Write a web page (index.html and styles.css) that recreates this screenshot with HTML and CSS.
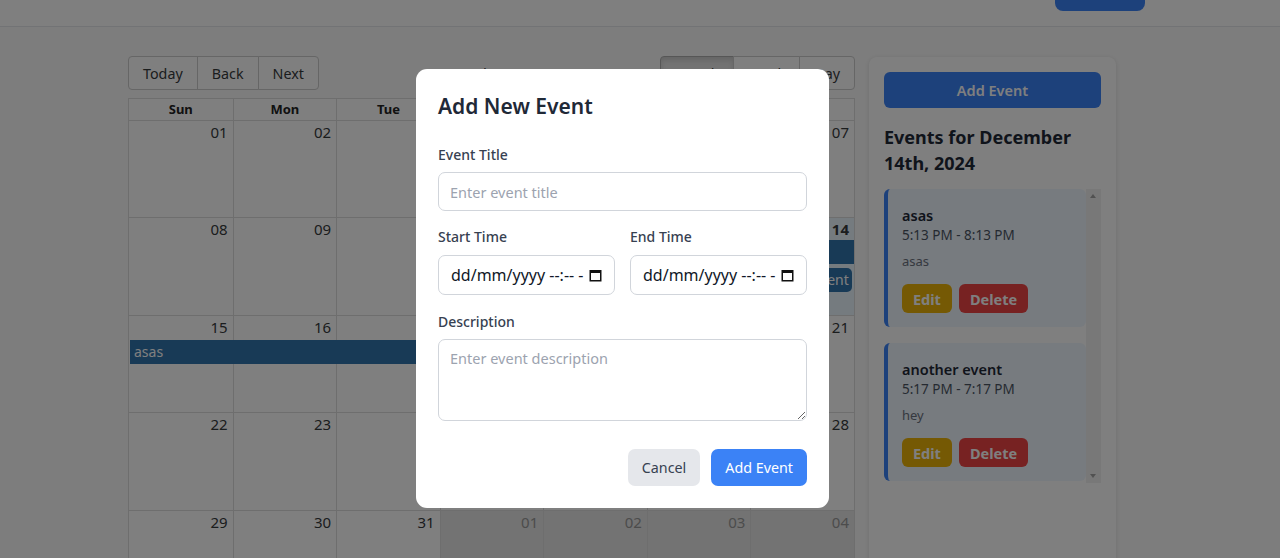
FILE: index.html
```html
<!DOCTYPE html>
<html lang="en">
<head>
    <meta charset="UTF-8">
    <meta name="viewport" content="width=device-width, initial-scale=1.0">
    <title>Event Calendar</title>
    <link rel="stylesheet" href="styles.css">
</head>
<body>
    <div class="page">
        <header class="topbar">
            <button class="topbar-btn">Logout</button>
        </header>

        <main class="layout">
            <section class="calendar">
                <div class="toolbar">
                    <div class="btn-group">
                        <button>Today</button>
                        <button>Back</button>
                        <button>Next</button>
                    </div>
                    <span class="toolbar-label">December 2024</span>
                    <div class="btn-group">
                        <button class="active">Month</button>
                        <button>Week</button>
                        <button>Day</button>
                    </div>
                </div>

                <div class="month">
                    <div class="month-head">
                        <div>Sun</div><div>Mon</div><div>Tue</div><div>Wed</div><div>Thu</div><div>Fri</div><div>Sat</div>
                    </div>

                    <div class="week">
                        <div class="cell c1"></div><div class="cell c2"></div><div class="cell c3"></div><div class="cell c4"></div><div class="cell c5"></div><div class="cell c6"></div><div class="cell c7"></div>
                        <span class="date c1">01</span><span class="date c2">02</span><span class="date c3">03</span><span class="date c4">04</span><span class="date c5">05</span><span class="date c6">06</span><span class="date c7">07</span>
                    </div>

                    <div class="week">
                        <div class="cell c1"></div><div class="cell c2"></div><div class="cell c3"></div><div class="cell c4"></div><div class="cell c5"></div><div class="cell c6"></div><div class="cell c7 today"></div>
                        <span class="date c1">08</span><span class="date c2">09</span><span class="date c3">10</span><span class="date c4">11</span><span class="date c5">12</span><span class="date c6">13</span><span class="date c7 now">14</span>
                        <div class="event ev-a continues-after">asas</div>
                        <div class="event ev-b">another event</div>
                    </div>

                    <div class="week">
                        <div class="cell c1"></div><div class="cell c2"></div><div class="cell c3"></div><div class="cell c4"></div><div class="cell c5"></div><div class="cell c6"></div><div class="cell c7"></div>
                        <span class="date c1">15</span><span class="date c2">16</span><span class="date c3">17</span><span class="date c4">18</span><span class="date c5">19</span><span class="date c6">20</span><span class="date c7">21</span>
                        <div class="event ev-c continues-prior">asas</div>
                    </div>

                    <div class="week">
                        <div class="cell c1"></div><div class="cell c2"></div><div class="cell c3"></div><div class="cell c4"></div><div class="cell c5"></div><div class="cell c6"></div><div class="cell c7"></div>
                        <span class="date c1">22</span><span class="date c2">23</span><span class="date c3">24</span><span class="date c4">25</span><span class="date c5">26</span><span class="date c6">27</span><span class="date c7">28</span>
                    </div>

                    <div class="week">
                        <div class="cell c1"></div><div class="cell c2"></div><div class="cell c3"></div><div class="cell c4 off"></div><div class="cell c5 off"></div><div class="cell c6 off"></div><div class="cell c7 off"></div>
                        <span class="date c1">29</span><span class="date c2">30</span><span class="date c3">31</span><span class="date c4 off">01</span><span class="date c5 off">02</span><span class="date c6 off">03</span><span class="date c7 off">04</span>
                    </div>
                </div>
            </section>

            <aside class="sidebar">
                <button class="sidebar-add">Add Event</button>
                <h3 class="sidebar-title">Events for December 14th, 2024</h3>

                <div class="event-scroll">
                    <div class="event-list">
                        <div class="event-card">
                            <div class="event-name">asas</div>
                            <div class="event-time">5:13 PM - 8:13 PM</div>
                            <div class="event-desc">asas</div>
                            <div class="event-actions">
                                <button class="btn-edit">Edit</button>
                                <button class="btn-delete">Delete</button>
                            </div>
                        </div>
                        <div class="event-card">
                            <div class="event-name">another event</div>
                            <div class="event-time">5:17 PM - 7:17 PM</div>
                            <div class="event-desc">hey</div>
                            <div class="event-actions">
                                <button class="btn-edit">Edit</button>
                                <button class="btn-delete">Delete</button>
                            </div>
                        </div>
                    </div>
                    <div class="scrollbar">
                        <span class="arrow up"></span>
                        <span class="arrow down"></span>
                    </div>
                </div>
            </aside>
        </main>
    </div>

    <!-- add event modal -->
    <div class="overlay">
        <div class="modal">
            <h2>Add New Event</h2>

            <div class="field">
                <label for="title">Event Title</label>
                <input type="text" id="title" placeholder="Enter event title">
            </div>

            <div class="field-row">
                <div class="field">
                    <label>Start Time</label>
                    <div class="date-input">
                        <span>dd/mm/yyyy --:-- -</span>
                        <svg width="13" height="13" viewBox="0 0 13 13"><rect x="1.25" y="1.75" width="10.5" height="10" fill="none" stroke="#111" stroke-width="1.5"/><rect x="1" y="1" width="11" height="3" fill="#111"/></svg>
                    </div>
                </div>
                <div class="field">
                    <label>End Time</label>
                    <div class="date-input">
                        <span>dd/mm/yyyy --:-- -</span>
                        <svg width="13" height="13" viewBox="0 0 13 13"><rect x="1.25" y="1.75" width="10.5" height="10" fill="none" stroke="#111" stroke-width="1.5"/><rect x="1" y="1" width="11" height="3" fill="#111"/></svg>
                    </div>
                </div>
            </div>

            <div class="field">
                <label for="desc">Description</label>
                <textarea id="desc" placeholder="Enter event description"></textarea>
            </div>

            <div class="modal-actions">
                <button class="btn-cancel">Cancel</button>
                <button class="btn-submit">Add Event</button>
            </div>
        </div>
    </div>
</body>
</html>
```

FILE: styles.css
```css
body {
    margin: 0;
    font-family: 'Noto Sans', 'Open Sans', sans-serif;
    background-color: #fafafa;
    color: #373a3c;
    overflow: hidden;
}

button {
    font-family: inherit;
    cursor: pointer;
}

/* page is scrolled a little, header is cut off */
.page {
    margin-top: -41px;
}

.topbar {
    height: 68px;
    box-sizing: border-box;
    padding: 12px 135px 0 0;
    display: flex;
    justify-content: flex-end;
    align-items: flex-start;
    background-color: #fff;
    border-bottom: 1px solid #e5e7eb;
}

.topbar-btn {
    width: 90px;
    height: 40px;
    border: none;
    border-radius: 8px;
    background-color: #3b82f6;
    color: #fff;
}

.layout {
    display: flex;
    gap: 14px;
    padding: 30px 0 0 128px;
}

/* calendar */
.calendar {
    width: 727px;
    height: 552px;
    margin-top: -1px;
    display: flex;
    flex-direction: column;
}

.toolbar {
    display: flex;
    align-items: center;
    margin-bottom: 8px;
}

.btn-group {
    display: flex;
}

.btn-group button {
    height: 34px;
    padding: 0 14px;
    font-size: 14.3px;
    color: #373a3c;
    background: #fff;
    border: 1px solid #ccc;
    margin-left: -1px;
}

.btn-group button:first-child {
    margin-left: 0;
    border-radius: 4px 0 0 4px;
}

.btn-group button:last-child {
    border-radius: 0 4px 4px 0;
}

.btn-group button.active {
    background-color: #e6e6e6;
    border-color: #adadad;
    box-shadow: inset 0 3px 5px rgba(0, 0, 0, 0.125);
}

.toolbar-label {
    flex: 1;
    text-align: center;
    font-size: 15px;
}

.month {
    flex: 1;
    display: flex;
    flex-direction: column;
    border: 1px solid #ddd;
    background: #fff;
}

.month-head {
    display: grid;
    grid-template-columns: repeat(7, 1fr);
    height: 21px;
    border-bottom: 1px solid #ddd;
}

.month-head div {
    text-align: center;
    font-weight: bold;
    font-size: 13px;
    line-height: 21px;
    color: #222;
    border-left: 1px solid #ddd;
}

.month-head div:first-child {
    border-left: none;
}

.week {
    flex: 1;
    display: grid;
    grid-template-columns: repeat(7, 1fr);
    grid-template-rows: 22px auto auto 1fr;
    border-top: 1px solid #ddd;
}

.week:nth-child(2) {
    border-top: none;
}

.cell {
    grid-row: 1 / -1;
    border-left: 1px solid #ddd;
}

.cell.c1 { border-left: none; }
.cell.today { background-color: #eaf6ff; }
.cell.off { background-color: #e6e6e6; }

.c1 { grid-column: 1; }
.c2 { grid-column: 2; }
.c3 { grid-column: 3; }
.c4 { grid-column: 4; }
.c5 { grid-column: 5; }
.c6 { grid-column: 6; }
.c7 { grid-column: 7; }

.date {
    grid-row: 1;
    text-align: right;
    padding-right: 5px;
    font-size: 15px;
    line-height: 22px;
    color: #373a3c;
}

.date.now { font-weight: bold; }
.date.off { color: #999; }

.event {
    margin: 0 2px 4px;
    height: 24px;
    box-sizing: border-box;
    padding: 2px 4px;
    background-color: #3174ad;
    color: #fff;
    border-radius: 5px;
    font-size: 14px;
    line-height: 20px;
    white-space: nowrap;
    overflow: hidden;
}

.ev-a { grid-row: 2; grid-column: 7; }
.ev-b { grid-row: 3; grid-column: 7; }
.ev-c { grid-row: 2; grid-column: 1 / 5; margin-top: 2px; }

.continues-after {
    margin-right: 0;
    border-top-right-radius: 0;
    border-bottom-right-radius: 0;
}

.continues-prior {
    margin-left: 1px;
    border-top-left-radius: 0;
    border-bottom-left-radius: 0;
}

/* sidebar */
.sidebar {
    width: 247px;
    height: 540px;
    box-sizing: border-box;
    padding: 15px;
    background-color: #fff;
    border-radius: 8px;
    box-shadow: 0 1px 4px rgba(0, 0, 0, 0.12);
}

.sidebar-add {
    width: 100%;
    height: 36px;
    border: none;
    border-radius: 6px;
    background-color: #3b82f6;
    color: #fff;
    font-size: 14.5px;
    font-weight: 600;
}

.sidebar-title {
    margin: 16px 0 13px;
    font-size: 18px;
    line-height: 26px;
    font-weight: 700;
    color: #1f2937;
}

.event-scroll {
    display: flex;
    height: 294px;
    overflow: hidden;
}

.event-list {
    flex: 1;
}

.scrollbar {
    width: 15px;
    background-color: #f1f1f1;
    position: relative;
}

.arrow {
    position: absolute;
    left: 4px;
    width: 0;
    height: 0;
    border-left: 3.5px solid transparent;
    border-right: 3.5px solid transparent;
}

.arrow.up {
    top: 5px;
    border-bottom: 4px solid #a3a3a3;
}

.arrow.down {
    bottom: 5px;
    border-top: 4px solid #a3a3a3;
}

.event-card {
    padding: 16px 14px 14px 14px;
    margin-bottom: 16px;
    background-color: #eff6ff;
    border-left: 4px solid #3b82f6;
    border-radius: 6px;
}

.event-name {
    font-size: 14.5px;
    font-weight: 600;
    line-height: 20px;
    color: #1f2937;
}

.event-time {
    font-size: 13.5px;
    line-height: 20px;
    color: #4b5563;
}

.event-desc {
    margin-top: 7px;
    font-size: 13px;
    line-height: 18px;
    color: #6b7280;
}

.event-actions {
    display: flex;
    gap: 7px;
    margin-top: 14px;
}

.event-actions button {
    height: 29px;
    padding: 0 11px;
    border: none;
    border-radius: 6px;
    color: #fff;
    font-size: 14.5px;
    font-weight: 700;
}

.btn-edit { background-color: #eab308; }
.btn-delete { background-color: #ef4444; }

/* modal */
.overlay {
    position: fixed;
    inset: 0;
    background-color: rgba(0, 0, 0, 0.5);
}

.modal {
    width: 413px;
    box-sizing: border-box;
    margin: 69px 0 0 416px;
    padding: 22px;
    background-color: #fff;
    border-radius: 11px;
    color: #1f2937;
}

.modal h2 {
    margin: 0 0 24px;
    font-size: 21px;
    line-height: 30px;
    font-weight: 600;
}

.field {
    margin-bottom: 16px;
}

.field label {
    display: block;
    margin-bottom: 7px;
    font-size: 14px;
    line-height: 20px;
    font-weight: 500;
    color: #374151;
}

.field input,
.field textarea,
.date-input {
    display: block;
    width: 100%;
    box-sizing: border-box;
    border: 1px solid #d1d5db;
    border-radius: 7px;
    font-family: inherit;
    font-size: 14.5px;
    color: #111827;
    background: #fff;
}

.field input {
    height: 39px;
    padding: 0 11px;
}

.field textarea {
    height: 82px;
    padding: 8px 11px;
    resize: vertical;
}

::placeholder {
    color: #9ca3af;
}

.field-row {
    display: grid;
    grid-template-columns: 1fr 1fr;
    gap: 15px;
}

.field-row .field {
    margin-bottom: 17px;
}

.field-row label {
    margin-bottom: 8px;
}

.date-input {
    height: 40px;
    padding: 0 0 0 12px;
    display: flex;
    align-items: center;
    gap: 5px;
    font-size: 16px;
}

.modal-actions {
    display: flex;
    justify-content: flex-end;
    gap: 11px;
    margin-top: 28px;
}

.modal-actions button {
    height: 37px;
    padding: 0 14px;
    border: none;
    border-radius: 7px;
    font-size: 14.3px;
}

.btn-cancel {
    background-color: #e5e7eb;
    color: #374151;
}

.btn-submit {
    background-color: #3b82f6;
    color: #fff;
}
```
